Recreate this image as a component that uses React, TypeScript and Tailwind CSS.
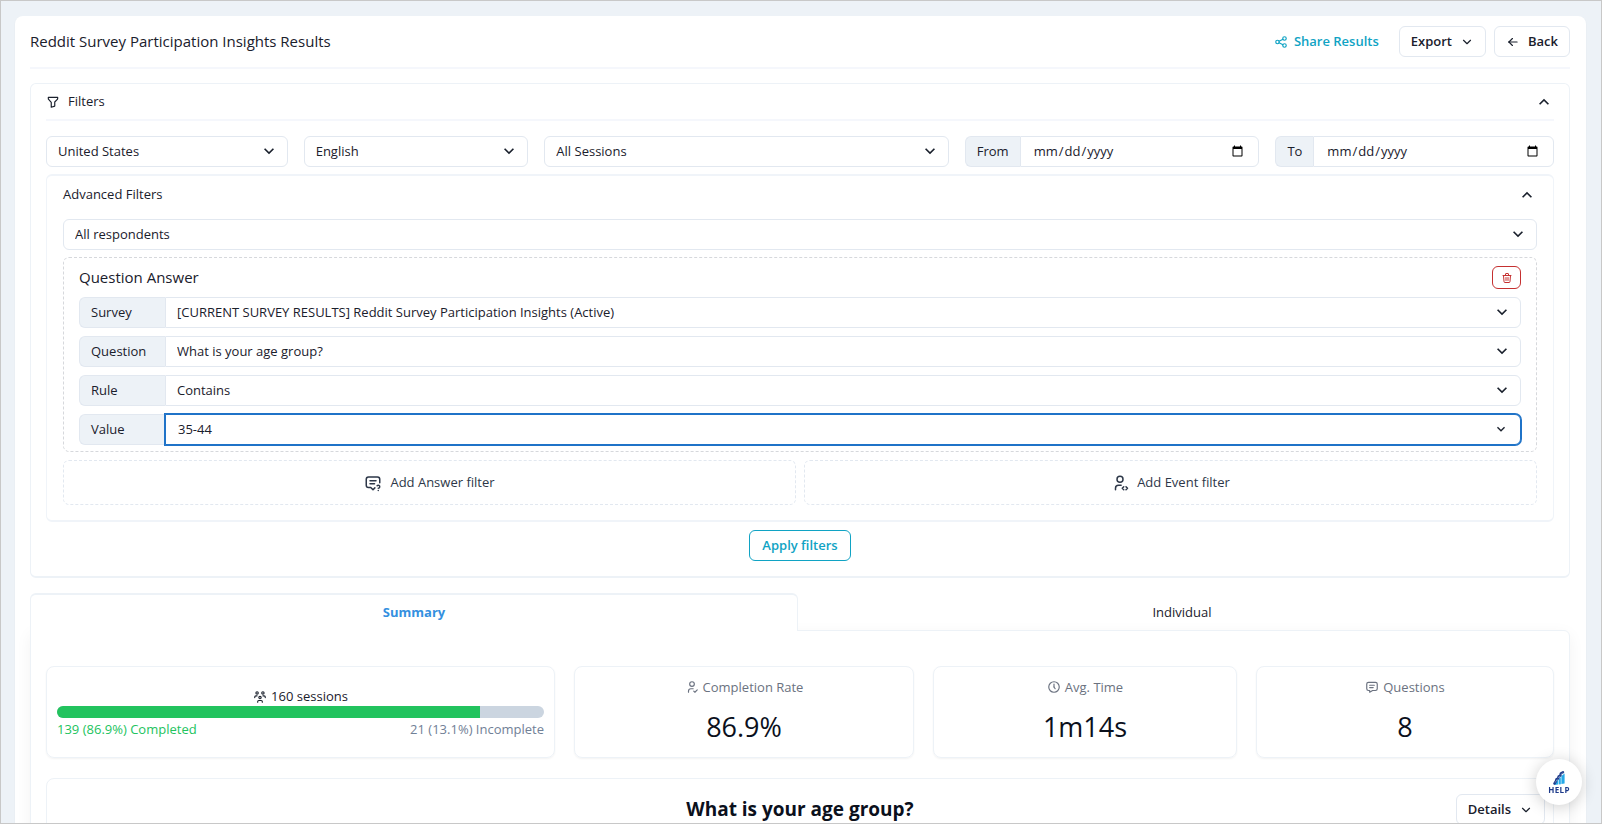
import React from "react";
import { MdExpandMore, MdExpandLess } from "react-icons/md";
import {
  TbShare,
  TbChevronDown,
  TbArrowLeft,
  TbFilter,
  TbTrash,
  TbMessage2Question,
  TbUserCode,
  TbUsersGroup,
  TbUserCheck,
  TbClockHour5,
  TbMessage,
} from "react-icons/tb";

const field =
  "h-[31px] w-full min-w-0 appearance-none border border-[#e2e8f0] bg-white text-[13px] text-[#1a202c] outline-none";

type PickerProps = {
  label: string;
  options: string[];
  attached?: boolean;
};

function Picker({ label, options, attached }: PickerProps) {
  return (
    <div className="relative min-w-0 flex-1">
      <select
        aria-label={label}
        className={`${field} pr-8 pl-[11px] ${attached ? "rounded-r-md" : "rounded-md"}`}
      >
        {options.map((option) => (
          <option key={option}>{option}</option>
        ))}
      </select>
      <MdExpandMore className="pointer-events-none absolute top-[5px] right-[9px] size-5 text-[#1a202c]" />
    </div>
  );
}

function DateField({ id, label }: { id: string; label: string }) {
  return (
    <div className="flex min-w-0">
      <label
        htmlFor={id}
        className="flex h-[31px] items-center rounded-l-md border border-r-0 border-[#e2e8f0] bg-[#edf2f7] px-[11px] text-[13px]"
      >
        {label}
      </label>
      <input id={id} type="date" className={`${field} rounded-r-md px-3 text-[13px]`} />
    </div>
  );
}

function RowLabel({ children }: { children: React.ReactNode }) {
  return (
    <span className="flex h-[31px] w-[86px] shrink-0 items-center rounded-l-md border border-r-0 border-[#e2e8f0] bg-[#edf2f7] pl-[11px] text-[13px]">
      {children}
    </span>
  );
}

function Stat({ icon, label, value }: { icon: React.ReactNode; label: string; value: string }) {
  return (
    <div className="flex flex-col items-center rounded-lg border border-[#edf2f7] pt-2.5 shadow-xs">
      <p className="flex items-center gap-1 text-[13px] leading-5 text-[#6b7280]">
        {icon}
        {label}
      </p>
      <p className="mt-2 text-[27px] leading-11 text-[#0b101c]">{value}</p>
    </div>
  );
}

function HelpLogo() {
  return (
    <svg viewBox="0 0 14 16" className="h-4 w-3.5" aria-hidden="true">
      <path d="M3.6 11.6 L6 10 V14.6 L2.4 15Z M6.6 9.4 L8.8 7 V14.2 L6.6 14.5Z M9.4 6 L12.6 3.4 V13.6 L9.4 14.1Z" fill="#25a9e8" />
      <path
        d="M2.4 13.6 L4 11 L4.4 9.4 L6.2 8.4 L6.6 6.6 L8.4 5.4 L8.8 3.6 L11 2.2"
        fill="none"
        stroke="#1d3a8a"
        strokeWidth="2.4"
        strokeLinejoin="round"
        strokeLinecap="round"
      />
      <path d="M3.2 12.6 L5.4 9.2 M6 8.2 L8 5.8 M8.8 5 L10.8 2.6" fill="none" stroke="#c7d8f5" strokeWidth="0.5" />
    </svg>
  );
}

export default function App() {
  return (
    <div className="h-screen overflow-y-auto border border-[#c8c8c8] bg-[#edf2f7] px-[15px] pt-[15px] pl-3.5 font-['Open_Sans',sans-serif] text-[13px] text-[#1a202c] [scrollbar-width:none]">
      <main className="rounded-lg bg-white pt-2.5 pr-4 pb-6 pl-[15px] shadow-xs">
        <header className="flex items-center gap-2 border-b-2 border-[#f5f7fc] pb-2.5">
          <h1 className="flex-1 text-[15px]">Reddit Survey Participation Insights Results</h1>
          <button className="mr-3 flex h-[31px] items-center gap-1.5 font-semibold text-[#10a3c4]">
            <TbShare className="size-3.5" />
            Share Results
          </button>
          <button className="flex h-[31px] items-center gap-2 rounded-md border border-[#e2e8f0] px-[11px] font-semibold">
            Export
            <TbChevronDown className="size-3.5" />
          </button>
          <button className="flex h-[31px] items-center gap-2 rounded-md border border-[#e2e8f0] px-[11px] font-semibold">
            <TbArrowLeft className="size-3.5" />
            Back
          </button>
        </header>

        <section className="mt-3.5 rounded-md border border-b-2 border-[#edf2f7] px-[15px] pb-[15px]">
          <button className="flex h-[37px] w-full items-center gap-2 border-b-2 border-[#f5f7fc] text-left">
            <TbFilter className="size-3.5" />
            <span className="flex-1">Filters</span>
            <MdExpandLess className="size-5" />
          </button>

          <div className="mt-[15px] grid grid-cols-[242fr_225fr_405fr_295fr_279fr] gap-4">
            <Picker label="Country" options={["United States"]} />
            <Picker label="Language" options={["English"]} />
            <Picker label="Sessions" options={["All Sessions"]} />
            <DateField id="from" label="From" />
            <DateField id="to" label="To" />
          </div>

          <div className="mt-[7px] rounded-md border border-y-2 border-[#f0f4f9] px-4 pb-[15px]">
            <button className="flex h-[43px] w-full items-center pb-1.5 text-left">
              <span className="flex-1">Advanced Filters</span>
              <MdExpandLess className="size-5" />
            </button>
            <Picker label="Respondents" options={["All respondents"]} />

            <div className="mt-[7px] rounded-md border border-dashed border-[#d6d8dc] px-[15px] pb-1.5">
              <div className="flex h-[39px] items-center">
                <h2 className="flex-1 text-[15px]">Question Answer</h2>
                <button
                  aria-label="Delete filter"
                  className="flex h-[23px] w-[29px] items-center justify-center rounded-md border border-[#c53030] text-[#c53030]"
                >
                  <TbTrash className="size-3" />
                </button>
              </div>
              <div className="flex flex-col gap-2">
                <div className="flex">
                  <RowLabel>Survey</RowLabel>
                  <Picker
                    attached
                    label="Survey"
                    options={["[CURRENT SURVEY RESULTS] Reddit Survey Participation Insights (Active)"]}
                  />
                </div>
                <div className="flex">
                  <RowLabel>Question</RowLabel>
                  <Picker attached label="Question" options={["What is your age group?"]} />
                </div>
                <div className="flex">
                  <RowLabel>Rule</RowLabel>
                  <Picker attached label="Rule" options={["Contains"]} />
                </div>
                <div className="flex">
                  <RowLabel>Value</RowLabel>
                  <div className="relative min-w-0 flex-1">
                    <select
                      aria-label="Value"
                      className="h-[31px] w-full appearance-none rounded-r-md border border-[#1f73c8] bg-white pr-8 pl-3 text-[13px] ring-1 ring-[#1f73c8] outline-none"
                    >
                      <option>35-44</option>
                    </select>
                    <MdExpandMore className="pointer-events-none absolute top-[7px] right-3 size-4" />
                  </div>
                </div>
              </div>
            </div>

            <div className="mt-2 grid grid-cols-2 gap-2 text-[#2d3748]">
              <button className="flex h-[45px] items-center justify-center gap-2 rounded-md border border-dashed border-[#e2e8f0]">
                <TbMessage2Question className="size-[18px]" />
                Add Answer filter
              </button>
              <button className="flex h-[45px] items-center justify-center gap-2 rounded-md border border-dashed border-[#e2e8f0]">
                <TbUserCode className="size-[18px]" />
                Add Event filter
              </button>
            </div>
          </div>

          <div className="mt-2 flex justify-center">
            <button className="h-[31px] rounded-md border border-[#10a3c4] px-3 font-semibold text-[#10a3c4]">
              Apply filters
            </button>
          </div>
        </section>

        <div role="tablist" className="relative z-10 mt-[15px] grid grid-cols-2 pr-1">
          <button
            role="tab"
            aria-selected="true"
            className="-mb-px h-[38px] rounded-t-md border border-t-2 border-b-0 border-[#edf2f7] bg-white font-bold text-[#3490e0]"
          >
            Summary
          </button>
          <button role="tab" aria-selected="false" className="-mb-px h-[38px] border-t-2 border-transparent">
            Individual
          </button>
        </div>

        <section className="rounded-b-md rounded-tr-md border border-[#edf2f7] px-[15px] pt-[35px] pb-6 shadow-[0_4px_16px_rgba(0,0,0,0.05)]">
          <div className="grid h-[92px] grid-cols-[509fr_340fr_304fr_298fr] gap-[19px]">
            <div className="flex flex-col rounded-lg border border-[#edf2f7] px-2.5 pt-5 shadow-xs">
              <p className="flex items-center justify-center gap-1 leading-[19px]">
                <TbUsersGroup className="size-3.5" />
                160 sessions
              </p>
              <div className="flex h-3 overflow-hidden rounded-full bg-[#cbd5e0]">
                <div className="bg-[#22c35e]" style={{ width: "86.9%" }} />
              </div>
              <p className="flex justify-between leading-[22px]">
                <span className="text-[#22c35e]">139 (86.9%) Completed</span>
                <span className="text-[#718096]">21 (13.1%) Incomplete</span>
              </p>
            </div>
            <Stat icon={<TbUserCheck className="size-3.5" />} label="Completion Rate" value="86.9%" />
            <Stat icon={<TbClockHour5 className="size-3.5" />} label="Avg. Time" value="1m14s" />
            <Stat icon={<TbMessage className="size-3.5" />} label="Questions" value="8" />
          </div>

          <article className="mt-5 grid grid-cols-[1fr_auto_1fr] rounded-lg border border-[#edf2f7] px-2 pt-[15px] pb-8">
            <h2 className="col-start-2 text-[19px] leading-[31px] font-bold text-[#0b101c]">What is your age group?</h2>
            <button className="flex h-[31px] items-center gap-2 justify-self-end rounded-md border border-[#e2e8f0] px-[11px] font-semibold">
              Details
              <TbChevronDown className="size-3.5" />
            </button>
          </article>
        </section>
      </main>

      <button className="fixed right-5 bottom-[19px] z-20 flex size-[46px] flex-col items-center justify-center rounded-full bg-white text-[8px] leading-2 font-bold tracking-wider text-[#1d3a8a] shadow-[0_2px_16px_rgba(0,0,0,0.2)]">
        <HelpLogo />
        HELP
      </button>
    </div>
  );
}
